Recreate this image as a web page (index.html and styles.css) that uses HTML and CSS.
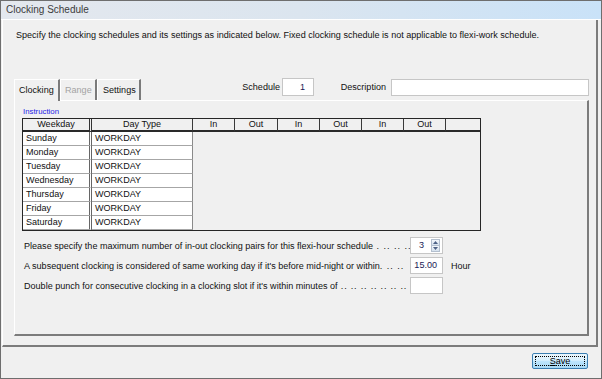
FILE: index.html
```html
<!DOCTYPE html>
<html lang="en">
<head>
<meta charset="utf-8">
<title>Clocking Schedule</title>
<link rel="stylesheet" href="styles.css">
</head>
<body>
<div class="window">
  <div class="titlebar">Clocking Schedule</div>
  <div class="main">
    <p class="intro">Specify the clocking schedules and its settings as indicated below. Fixed clocking schedule is not applicable to flexi-work schedule.</p>
    <div class="tabrow">
      <div class="tabs">
        <div class="tab tab-active">Clocking</div>
        <div class="tab tab-disabled">Range</div>
        <div class="tab tab-settings">Settings</div>
      </div>
      <div class="fields">
        <span class="field-label label-schedule">Schedule</span>
        <div class="textbox box-schedule">1</div>
        <span class="field-label label-desc">Description</span>
        <div class="textbox box-desc"></div>
      </div>
    </div>
    <div class="tabpanel">
      <div class="instruction">Instruction</div>
      <div class="grid">
        <div class="hcell hcell-wd">Weekday</div>
        <div class="hcell hcell-type">Day Type</div>
        <div class="hcell">In</div>
        <div class="hcell">Out</div>
        <div class="hcell">In</div>
        <div class="hcell">Out</div>
        <div class="hcell">In</div>
        <div class="hcell">Out</div>
        <div class="hcell hcell-last"></div>
        <div class="grid-empty"></div>
        <div class="cell cell-wd">Sunday</div><div class="cell cell-type">WORKDAY</div>
        <div class="cell cell-wd">Monday</div><div class="cell cell-type">WORKDAY</div>
        <div class="cell cell-wd">Tuesday</div><div class="cell cell-type">WORKDAY</div>
        <div class="cell cell-wd">Wednesday</div><div class="cell cell-type">WORKDAY</div>
        <div class="cell cell-wd">Thursday</div><div class="cell cell-type">WORKDAY</div>
        <div class="cell cell-wd">Friday</div><div class="cell cell-type">WORKDAY</div>
        <div class="cell cell-wd">Saturday</div><div class="cell cell-type">WORKDAY</div>
      </div>
      <div class="settings">
        <div class="setting-row">
          <span class="setting-label">Please specify the maximum number of in-out clocking pairs for this flexi-hour schedule<span class="leader"> . .. .. ..</span></span>
          <div class="textbox spin">
            <span class="spin-value">3</span>
            <span class="spin-buttons">
              <span class="spin-btn"><svg width="5" height="3" viewBox="0 0 5 3"><path d="M0 3 L2.5 0 L5 3 Z" fill="#4d6185"/></svg></span>
              <span class="spin-btn"><svg width="5" height="3" viewBox="0 0 5 3"><path d="M0 0 L2.5 3 L5 0 Z" fill="#4d6185"/></svg></span>
            </span>
          </div>
        </div>
        <div class="setting-row">
          <span class="setting-label">A subsequent clocking is considered of same working day if it's before mid-night or within<span class="leader">. .. ..</span></span>
          <div class="textbox num">15.00</div>
          <span class="unit">Hour</span>
        </div>
        <div class="setting-row">
          <span class="setting-label">Double punch for consecutive clocking in a clocking slot if it's within minutes of<span class="leader leader-tight"> .. .. .. .. .. .. ..</span></span>
          <div class="textbox num"></div>
        </div>
      </div>
    </div>
  </div>
  <div class="footer">
    <button class="btn-save" type="button"><u>S</u>ave</button>
  </div>
</div>
</body>
</html>
```

FILE: styles.css
```css
* { box-sizing: border-box; }
html, body { margin: 0; padding: 0; }
body {
  width: 602px;
  height: 379px;
  background: #f0f0f0;
  font-family: "Liberation Sans", Arial, sans-serif;
  font-size: 9.05px;
  color: #111;
}
.window {
  width: 602px;
  height: 379px;
  border: 1px solid #6e6e6e;
  display: flex;
  flex-direction: column;
  background: #f0f0f0;
}
.titlebar {
  flex: none;
  height: 19px;
  border-bottom: 1px solid #fff;
  padding-left: 5px;
  font-size: 10px;
  line-height: 18px;
  color: #3c3c3c;
  background: linear-gradient(to right, #e4e8ee 0%, #dbe5ef 50%, #c9e2f8 100%);
}
.main {
  flex: none;
  height: 327px;
  margin: 0 3px 0 1px;
  border-left: 1px solid #fff;
  border-right: 2px solid #7c7c7c;
  border-bottom: 2px solid #7c7c7c;
  padding: 10px 7px 0 11px;
}
.intro {
  margin: 0 0 0 2px;
  line-height: 11px;
  white-space: nowrap;
}
.tabrow {
  margin-top: 38px;
  height: 21px;
  display: flex;
  align-items: flex-start;
}
.tabs { display: flex; }
.tab {
  height: 21px;
  border-top: 1px solid #fff;
  border-left: 1px solid #fff;
  border-right: 2px solid #7a7a7a;
  padding-left: 4px;
  line-height: 20px;
  white-space: nowrap;
}
.tab-active {
  width: 46px;
  height: 22px;
  position: relative;
  z-index: 1;
  background: #f0f0f0;
}
.tab-disabled { width: 37px; color: #a3a3a3; }
.tab-settings { width: 44px; padding-left: 5px; }
.fields {
  margin-left: auto;
  margin-top: -1px;
  display: flex;
  align-items: center;
}
.field-label { text-align: right; white-space: nowrap; }
.label-schedule { width: 60px; margin-right: 2px; }
.label-desc { width: 77px; padding-right: 5px; }
.textbox {
  flex: none;
  background: #fff;
  border: 1px solid #c6c6c6;
  color: #1a1a55;
  text-align: right;
}
.box-schedule { width: 32px; height: 18px; line-height: 16px; padding-right: 8px; }
.box-desc { width: 198px; height: 17px; }
.tabpanel {
  height: 236px;
  border-top: 1px solid #fff;
  border-left: 1px solid #fff;
  border-right: 2px solid #7c7c7c;
  border-bottom: 2px solid #7c7c7c;
  padding: 6px 0 0 7px;
}
.instruction {
  font-size: 7.8px;
  line-height: 10px;
  color: #2323e6;
  padding-left: 1px;
  margin-bottom: 1px;
}
.grid {
  width: 459px;
  display: grid;
  grid-template-columns: 69px 101px 42px 43px 42px 42px 42px 42px 34px;
  grid-template-rows: 13px repeat(7, 14px);
  border: 1px solid #262626;
  background: #f0f0f0;
}
.hcell {
  border-right: 1px solid #3a3a3a;
  border-bottom: 2px solid #2a2a2a;
  text-align: center;
  line-height: 11px;
  white-space: nowrap;
}
.hcell-wd { border-right: 3px double #333; }
.hcell-last { border-right: none; }
.grid-empty {
  grid-column: 3 / -1;
  grid-row: 2 / -1;
}
.cell {
  background: #fff;
  border-bottom: 1px solid #a6a6a6;
  padding-left: 3px;
  line-height: 13px;
  white-space: nowrap;
}
.cell-wd { border-right: 3px double #666; }
.cell-type { border-right: 1px solid #8a8a8a; }
.settings {
  margin-top: 6px;
  display: flex;
  flex-direction: column;
  gap: 3px;
}
.setting-row {
  height: 17px;
  display: flex;
  align-items: center;
}
.setting-label {
  flex: none;
  width: 386px;
  margin-left: 2px;
  white-space: nowrap;
}
.leader { letter-spacing: 1px; }
.leader-tight { letter-spacing: 0.8px; }
.num {
  width: 33px;
  height: 17px;
  line-height: 15px;
  padding-right: 5px;
}
.spin {
  width: 33px;
  height: 17px;
  display: flex;
  align-items: center;
  justify-content: flex-end;
  padding-right: 2px;
}
.spin-value { margin-right: 7px; line-height: 15px; }
.spin-buttons {
  width: 9px;
  height: 13px;
  display: flex;
  flex-direction: column;
}
.spin-btn {
  flex: 1;
  display: flex;
  align-items: center;
  justify-content: center;
  background: linear-gradient(#f4f8fc, #d5e1ee);
  border: 1px solid #b3bfce;
}
.spin-btn + .spin-btn { border-top: none; }
.unit { margin-left: 8px; }
.footer {
  flex: 1;
  display: flex;
  justify-content: flex-end;
  align-items: flex-start;
  padding: 6px 13px 0 0;
}
.btn-save {
  position: relative;
  width: 56px;
  height: 16px;
  padding: 0;
  margin: 0;
  border: 1px solid #3c7fb1;
  border-radius: 2px;
  background: linear-gradient(#eaf6fd 0%, #d9f0fc 45%, #bee6fd 50%, #a7d9f5 100%);
  font-family: "Liberation Sans", Arial, sans-serif;
  font-size: 9.05px;
  line-height: 14px;
  color: #000;
}
.btn-save::after {
  content: "";
  position: absolute;
  inset: 2px;
  border: 1px dotted #000;
}
```
